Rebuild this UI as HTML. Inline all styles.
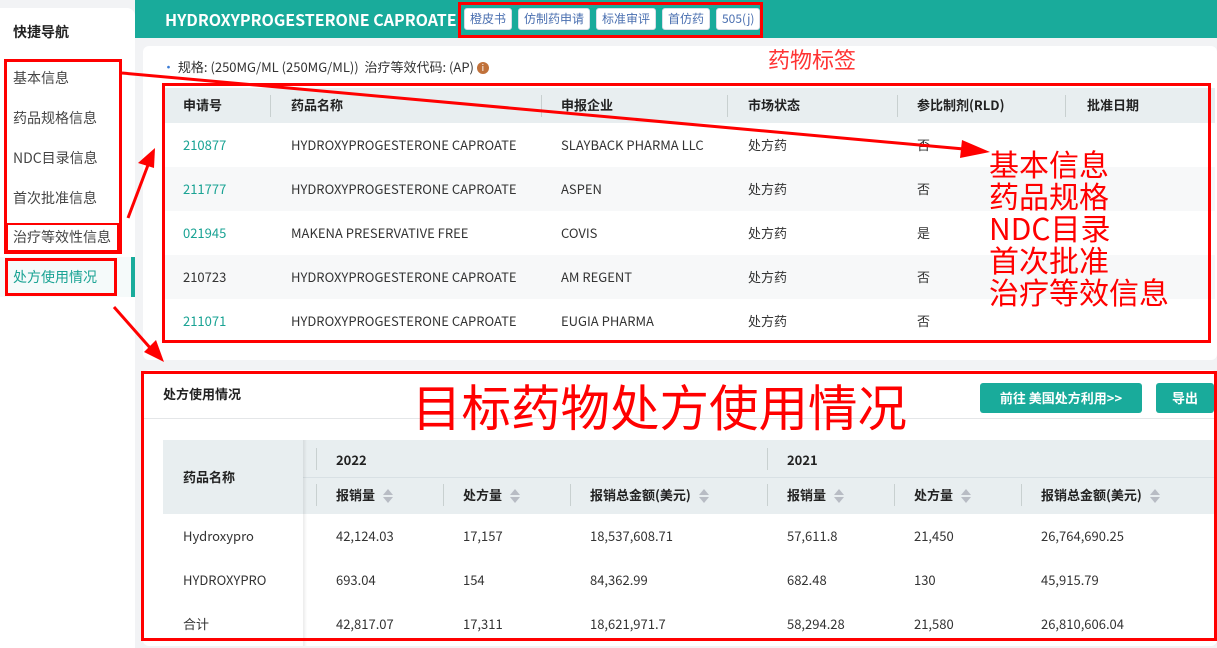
<!DOCTYPE html>
<html><head><meta charset="utf-8"><style>
*{margin:0;padding:0;box-sizing:border-box}
body{width:1217px;height:646px;overflow:hidden;background:#f2f3f5;font-family:"Noto Sans CJK SC","Liberation Sans",sans-serif;font-size:13px;line-height:1.2;color:#333;position:relative}
.a{position:absolute;white-space:nowrap}
.side{position:absolute;left:0;top:8px;width:135px;height:640px;background:#fff;border-top-right-radius:8px}
.nav{position:absolute;left:13px;font-size:14px;color:#444;line-height:1.2}
.hdr{position:absolute;left:135px;top:0;width:1082px;height:38px;background:#19ab9b}
.tag{position:absolute;top:8px;height:22px;background:#fff;border-radius:3px;color:#4a6fb0;font-size:12px;line-height:20px;padding:0 5px;border:1px solid #d8dde8}
.p{position:absolute;background:#fff;border-radius:6px}
.th{font-weight:bold;color:#222}
.rb{position:absolute;border:3px solid #f00}
.red{color:#f00;position:absolute;white-space:nowrap;line-height:1}
.sep{position:absolute;width:1px;background:#c8d0d0}
.g{color:#1aa394}
.sort{display:inline-block;vertical-align:middle;margin-left:8px;width:10px;height:14px;position:relative}
.sort:before{content:"";position:absolute;left:0;top:0;border:5px solid transparent;border-bottom:6px solid #b8bcc4;border-top:0}
.sort:after{content:"";position:absolute;left:0;top:8px;border:5px solid transparent;border-top:6px solid #b8bcc4;border-bottom:0}
.btn{position:absolute;top:383px;height:30px;background:#19ab9b;color:#fff;border-radius:3px;font-size:13px;line-height:30px;text-align:center;font-weight:bold}
</style></head><body>
<div class="side"></div>
<div class="a" style="left:13px;top:24px;font-size:14px;font-weight:bold;color:#222">快捷导航</div>
<div class="nav" style="top:70px">基本信息</div>
<div class="nav" style="top:110px">药品规格信息</div>
<div class="nav" style="top:150px">NDC目录信息</div>
<div class="nav" style="top:190px">首次批准信息</div>
<div class="nav" style="top:229px">治疗等效性信息</div>
<div style="position:absolute;left:0;top:257px;width:135px;height:40px;background:#f5fafa"></div>
<div style="position:absolute;left:131px;top:257px;width:4px;height:40px;background:#19ab9b"></div>
<div class="nav g" style="top:269px;color:#1aa394">处方使用情况</div>

<div class="hdr"></div>
<div class="a" style="left:165px;top:8px;color:#fff;font-weight:bold;font-size:16px;line-height:22px">HYDROXYPROGESTERONE CAPROATE</div>
<div class="tag" style="left:464px">橙皮书</div>
<div class="tag" style="left:518px">仿制药申请</div>
<div class="tag" style="left:596px">标准审评</div>
<div class="tag" style="left:662px">首仿药</div>
<div class="tag" style="left:716px">505(j)</div>

<div class="p" style="left:143px;top:46px;width:1074px;height:314px"></div>
<div class="a" style="left:162px;top:59px;font-size:13px;color:#333"><span style="color:#3a7bd5">•</span> 规格: (250MG/ML (250MG/ML))&nbsp; 治疗等效代码: (AP) <span style="display:inline-block;width:12px;height:12px;border-radius:50%;background:#c0713a;color:#fff;font-size:9px;line-height:12px;text-align:center;vertical-align:middle">i</span></div>
<div style="position:absolute;left:165px;top:88px;width:1050px;height:35px;background:#e8eef0"></div>
<div style="position:absolute;left:165px;top:167px;width:1050px;height:44px;background:#f7f8f9"></div>
<div style="position:absolute;left:165px;top:255px;width:1050px;height:44px;background:#f7f8f9"></div>
<div class="sep" style="left:270px;top:95px;height:22px"></div>
<div class="sep" style="left:541px;top:95px;height:22px"></div>
<div class="sep" style="left:727px;top:95px;height:22px"></div>
<div class="sep" style="left:897px;top:95px;height:22px"></div>
<div class="sep" style="left:1065px;top:95px;height:22px"></div>
<div class="a th" style="left:183px;top:97px">申请号</div>
<div class="a th" style="left:291px;top:97px">药品名称</div>
<div class="a th" style="left:561px;top:97px">申报企业</div>
<div class="a th" style="left:748px;top:97px">市场状态</div>
<div class="a th" style="left:917px;top:97px">参比制剂(RLD)</div>
<div class="a th" style="left:1087px;top:97px">批准日期</div>

<div class="a g" style="left:183px;top:137px">210877</div><div class="a" style="left:291px;top:137px">HYDROXYPROGESTERONE CAPROATE</div><div class="a" style="left:561px;top:137px">SLAYBACK PHARMA LLC</div><div class="a" style="left:748px;top:137px">处方药</div><div class="a" style="left:917px;top:137px">否</div>
<div class="a g" style="left:183px;top:181px">211777</div><div class="a" style="left:291px;top:181px">HYDROXYPROGESTERONE CAPROATE</div><div class="a" style="left:561px;top:181px">ASPEN</div><div class="a" style="left:748px;top:181px">处方药</div><div class="a" style="left:917px;top:181px">否</div>
<div class="a g" style="left:183px;top:225px">021945</div><div class="a" style="left:291px;top:225px">MAKENA PRESERVATIVE FREE</div><div class="a" style="left:561px;top:225px">COVIS</div><div class="a" style="left:748px;top:225px">处方药</div><div class="a" style="left:917px;top:225px">是</div>
<div class="a" style="left:183px;top:269px">210723</div><div class="a" style="left:291px;top:269px">HYDROXYPROGESTERONE CAPROATE</div><div class="a" style="left:561px;top:269px">AM REGENT</div><div class="a" style="left:748px;top:269px">处方药</div><div class="a" style="left:917px;top:269px">否</div>
<div class="a g" style="left:183px;top:313px">211071</div><div class="a" style="left:291px;top:313px">HYDROXYPROGESTERONE CAPROATE</div><div class="a" style="left:561px;top:313px">EUGIA PHARMA</div><div class="a" style="left:748px;top:313px">处方药</div><div class="a" style="left:917px;top:313px">否</div>

<div class="p" style="left:143px;top:370px;width:1074px;height:276px"></div>
<div class="a th" style="left:163px;top:386px">处方使用情况</div>
<div style="position:absolute;left:143px;top:418px;width:1074px;height:1px;background:#e4e6e8"></div>
<div class="btn" style="left:980px;width:162px">前往 美国处方利用&gt;&gt;</div>
<div class="btn" style="left:1156px;width:58px">导出</div>
<div style="position:absolute;left:163px;top:440px;width:1054px;height:74px;background:#e8eef0"></div>
<div style="position:absolute;left:303px;top:477px;width:914px;height:1px;background:#d8e0e4"></div>
<div style="position:absolute;left:303px;top:440px;width:4px;height:206px;background:linear-gradient(90deg,rgba(0,0,0,.08),rgba(0,0,0,0))"></div>
<div class="sep" style="left:316px;top:448px;height:22px"></div>
<div class="sep" style="left:767px;top:448px;height:22px"></div>
<div class="sep" style="left:316px;top:484px;height:22px"></div>
<div class="sep" style="left:443px;top:484px;height:22px"></div>
<div class="sep" style="left:570px;top:484px;height:22px"></div>
<div class="sep" style="left:767px;top:484px;height:22px"></div>
<div class="sep" style="left:894px;top:484px;height:22px"></div>
<div class="sep" style="left:1021px;top:484px;height:22px"></div>
<div class="a th" style="left:183px;top:469px">药品名称</div>
<div class="a th" style="left:336px;top:452px">2022</div>
<div class="a th" style="left:787px;top:452px">2021</div>
<div class="a th" style="left:336px;top:487px">报销量<span class="sort"></span></div>
<div class="a th" style="left:463px;top:487px">处方量<span class="sort"></span></div>
<div class="a th" style="left:590px;top:487px">报销总金额(美元)<span class="sort"></span></div>
<div class="a th" style="left:787px;top:487px">报销量<span class="sort"></span></div>
<div class="a th" style="left:914px;top:487px">处方量<span class="sort"></span></div>
<div class="a th" style="left:1041px;top:487px">报销总金额(美元)<span class="sort"></span></div>

<div class="a" style="left:183px;top:528px">Hydroxypro</div><div class="a" style="left:336px;top:528px">42,124.03</div><div class="a" style="left:463px;top:528px">17,157</div><div class="a" style="left:590px;top:528px">18,537,608.71</div><div class="a" style="left:787px;top:528px">57,611.8</div><div class="a" style="left:914px;top:528px">21,450</div><div class="a" style="left:1041px;top:528px">26,764,690.25</div>
<div class="a" style="left:183px;top:572px">HYDROXYPRO</div><div class="a" style="left:336px;top:572px">693.04</div><div class="a" style="left:463px;top:572px">154</div><div class="a" style="left:590px;top:572px">84,362.99</div><div class="a" style="left:787px;top:572px">682.48</div><div class="a" style="left:914px;top:572px">130</div><div class="a" style="left:1041px;top:572px">45,915.79</div>
<div class="a" style="left:183px;top:616px">合计</div><div class="a" style="left:336px;top:616px">42,817.07</div><div class="a" style="left:463px;top:616px">17,311</div><div class="a" style="left:590px;top:616px">18,621,971.7</div><div class="a" style="left:787px;top:616px">58,294.28</div><div class="a" style="left:914px;top:616px">21,580</div><div class="a" style="left:1041px;top:616px">26,810,606.04</div>

<!-- annotations -->
<div class="rb" style="left:458px;top:2px;width:305px;height:36px"></div>
<div class="rb" style="left:4px;top:59px;width:118px;height:195px"></div>
<div class="rb" style="left:6px;top:223px;width:113px;height:29px;border-width:2px"></div>
<div class="rb" style="left:5px;top:258px;width:112px;height:38px"></div>
<div class="rb" style="left:162px;top:83px;width:1049px;height:260px"></div>
<div class="rb" style="left:141px;top:371px;width:1076px;height:270px"></div>
<div class="red" style="left:768px;top:44px;font-size:22px;line-height:30px;color:#f33">药物标签</div>
<div class="red" style="left:989px;top:147px;font-size:30px;line-height:32px">基本信息<br>药品规格<br>NDC目录<br>首次批准<br>治疗等效信息</div>
<div class="red" style="left:412px;top:377px;font-size:49.5px;line-height:58px">目标药物处方使用情况</div>
<svg style="position:absolute;left:0;top:0" width="1217" height="646">
<g stroke="#f00" stroke-width="3" fill="#f00">
<line x1="122" y1="73" x2="975" y2="150"/>
<polygon points="990,152 962,140 960,158" stroke="none"/>
<line x1="128" y1="218" x2="148" y2="165"/>
<polygon points="155,148 138,163 154,168" stroke="none"/>
<line x1="114" y1="307" x2="152" y2="350"/>
<polygon points="164,362 144,352 156,340" stroke="none"/>
</g></svg>
</body></html>
